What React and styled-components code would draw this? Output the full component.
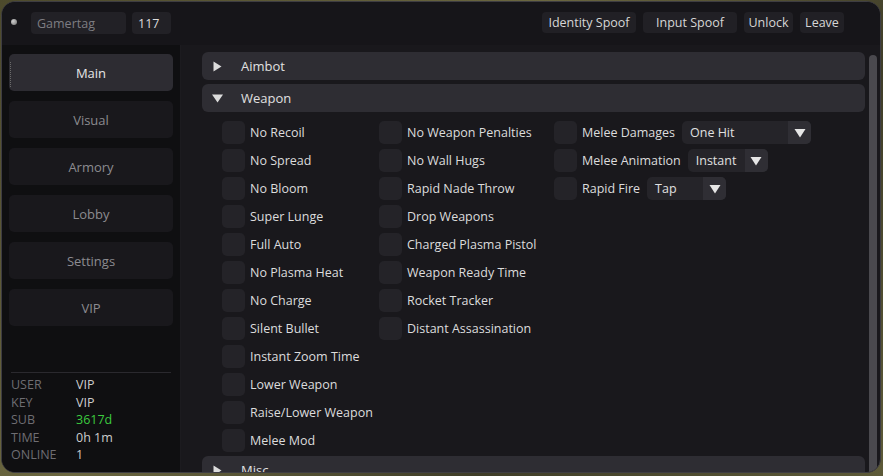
import React from "react";
import styled, { createGlobalStyle } from "styled-components";

const Global = createGlobalStyle`
  html, body { margin: 0; padding: 0; }
  body {
    width: 883px; height: 476px; overflow: hidden;
    background: linear-gradient(135deg, #4d4a2c 0%, #6b6740 40%, #3f3d28 70%, #5d5a38 100%);
    font-family: "Open Sans", "Noto Sans", sans-serif;
  }
`;

const Window = styled.div`
  margin: 1px 0 0 1px;
  width: 878px;
  height: 470px;
  border: 1px solid #3e3d42;
  border-radius: 14px;
  overflow: hidden;
  background: #19181c;
  display: flex;
  flex-direction: column;
  font-size: 12.5px;
  color: #dcdcdc;
`;

const TopBar = styled.div`
  height: 43px;
  flex: none;
  display: flex;
  align-items: center;
  padding: 0 36px 0 9px;
  background: #161519;
`;

const Dot = styled.div`
  width: 6px; height: 6px; border-radius: 50%;
  background: radial-gradient(circle at 35% 35%, #cfcfcf, #707070);
  margin-right: 14px;
  margin-top: -4px;
`;

const Field = styled.div`
  height: 22px;
  width: ${(p) => p.w}px;
  box-sizing: border-box;
  border-radius: 4px;
  background: #222126;
  color: ${(p) => (p.dim ? "#7e7d82" : "#dedede")};
  display: flex;
  align-items: center;
  padding-left: 6px;
  margin: -1px 6px 0 0;
`;

const Spacer = styled.div` flex: 1; `;

const TopButton = styled.div`
  height: 21px;
  width: ${(p) => p.w}px;
  border-radius: 4px;
  background: #212025;
  color: #d6d6d6;
  display: flex;
  align-items: center;
  justify-content: center;
  margin: -2px 0 0 7px;
`;

const Body = styled.div`
  flex: 1;
  display: flex;
  min-height: 0;
`;

const Sidebar = styled.div`
  width: 179px;
  flex: none;
  background: #0f0f11;
  border-right: 1px solid #1c1b1f;
  display: flex;
  flex-direction: column;
  padding: 9px 0 0 7px;
  box-sizing: border-box;
`;

const NavButton = styled.div`
  width: 164px;
  height: 37px;
  border-radius: 5px;
  background: ${(p) => (p.active ? "#2d2c32" : "#19181c")};
  color: ${(p) => (p.active ? "#e6e6e6" : "#8c8b90")};
  font-size: 13px;
  display: flex;
  align-items: center;
  justify-content: center;
  margin-bottom: 10px;
  position: relative;
  ${(p) => p.active && `&::before { content: ""; position: absolute; left: 1px; top: 8px; bottom: 4px; border-left: 1px dotted #6a6a6a; }`}
`;

const Info = styled.div`
  margin-top: auto;
  margin-left: 2px;
  width: 160px;
  border-top: 1px solid #2a292e;
  padding: 3px 0 8px 0;
  display: grid;
  grid-template-columns: 65px 1fr;
  font-size: 12.5px;
  line-height: 17.6px;
`;

const Label = styled.div` color: #6e6d72; `;
const Value = styled.div` color: ${(p) => p.color || "#cdcdcd"}; `;

const Content = styled.div`
  flex: 1;
  display: flex;
  min-width: 0;
  padding: 7px 3px 0 21px;
`;

const List = styled.div`
  flex: 1;
  display: flex;
  flex-direction: column;
  gap: 4px;
  min-width: 0;
`;

const Header = styled.div`
  height: 28px;
  flex: none;
  border-radius: 6px;
  background: #2e2d33;
  display: flex;
  align-items: center;
  padding-left: 10px;
  color: #e0e0e0;
  font-size: 13px;
`;

const Arrow = styled.svg`
  width: 11px; height: 11px;
  margin-right: 18px;
  flex: none;
`;

const Grid = styled.div`
  display: grid;
  grid-template-columns: 157px 175px 1fr;
  padding: 5px 0 0 20px;
`;

const Col = styled.div`
  display: flex;
  flex-direction: column;
  gap: 5px;
`;

const Row = styled.div`
  display: flex;
  align-items: center;
  height: 23px;
  white-space: nowrap;
`;

const Check = styled.div`
  width: 23px; height: 23px;
  border-radius: 5px;
  background: #242328;
  flex: none;
  margin-right: 5px;
`;

const Combo = styled.div`
  height: 23px;
  width: ${(p) => p.w}px;
  margin-left: ${(p) => p.ml}px;
  border-radius: 5px;
  background: #252429;
  display: flex;
  align-items: center;
  overflow: hidden;
  flex: none;
`;

const ComboText = styled.div`
  flex: 1;
  padding-left: 8px;
  color: #e0e0e0;
`;

const ComboBtn = styled.div`
  width: 23px;
  height: 23px;
  background: #2f2e34;
  display: flex;
  align-items: center;
  justify-content: center;
`;

const Scroll = styled.div`
  width: 8px;
  flex: none;
  margin-left: 4px;
  padding-top: 3px;
`;

const Thumb = styled.div`
  width: 8px;
  height: 420px;
  border-radius: 4px;
  background: #4a494e;
`;

const Right = () => (
  <Arrow viewBox="0 0 11 11"><path d="M1.5 0.5 L9.5 5.5 L1.5 10.5 Z" fill="#dcdcdc" /></Arrow>
);
const Down = () => (
  <Arrow viewBox="0 0 11 11"><path d="M0 1.5 L11 1.5 L5.5 9.5 Z" fill="#dcdcdc" /></Arrow>
);
const SmallDown = () => (
  <svg width="12" height="10" viewBox="0 0 12 10"><path d="M0.5 1 L11.5 1 L6 9.5 Z" fill="#e6e6e6" /></svg>
);

const col1 = ["No Recoil","No Spread","No Bloom","Super Lunge","Full Auto","No Plasma Heat","No Charge","Silent Bullet","Instant Zoom Time","Lower Weapon","Raise/Lower Weapon","Melee Mod"];
const col2 = ["No Weapon Penalties","No Wall Hugs","Rapid Nade Throw","Drop Weapons","Charged Plasma Pistol","Weapon Ready Time","Rocket Tracker","Distant Assassination"];
const col3 = [
  { label: "Melee Damages", value: "One Hit", w: 129 },
  { label: "Melee Animation", value: "Instant", w: 80 },
  { label: "Rapid Fire", value: "Tap", w: 79 },
];

export default function App() {
  return (
    <>
      <Global />
      <Window>
        <TopBar>
          <Dot />
          <Field w={95} dim>Gamertag</Field>
          <Field w={39}>117</Field>
          <Spacer />
          <TopButton w={94}>Identity Spoof</TopButton>
          <TopButton w={94}>Input Spoof</TopButton>
          <TopButton w={49}>Unlock</TopButton>
          <TopButton w={44}>Leave</TopButton>
        </TopBar>
        <Body>
          <Sidebar>
            <NavButton active>Main</NavButton>
            <NavButton>Visual</NavButton>
            <NavButton>Armory</NavButton>
            <NavButton>Lobby</NavButton>
            <NavButton>Settings</NavButton>
            <NavButton>VIP</NavButton>
            <Info>
              <Label>USER</Label><Value>VIP</Value>
              <Label>KEY</Label><Value>VIP</Value>
              <Label>SUB</Label><Value color="#3ccb3f">3617d</Value>
              <Label>TIME</Label><Value>0h 1m</Value>
              <Label>ONLINE</Label><Value>1</Value>
            </Info>
          </Sidebar>
          <Content>
            <List>
              <Header><Right />Aimbot</Header>
              <Header><Down />Weapon</Header>
              <Grid>
                <Col>{col1.map((t) => <Row key={t}><Check />{t}</Row>)}</Col>
                <Col>{col2.map((t) => <Row key={t}><Check />{t}</Row>)}</Col>
                <Col>
                  {col3.map((c) => (
                    <Row key={c.label}>
                      <Check />{c.label}
                      <Combo w={c.w} ml={7}>
                        <ComboText>{c.value}</ComboText>
                        <ComboBtn><SmallDown /></ComboBtn>
                      </Combo>
                    </Row>
                  ))}
                </Col>
              </Grid>
              <Header><Right />Misc</Header>
            </List>
            <Scroll><Thumb /></Scroll>
          </Content>
        </Body>
      </Window>
    </>
  );
}
